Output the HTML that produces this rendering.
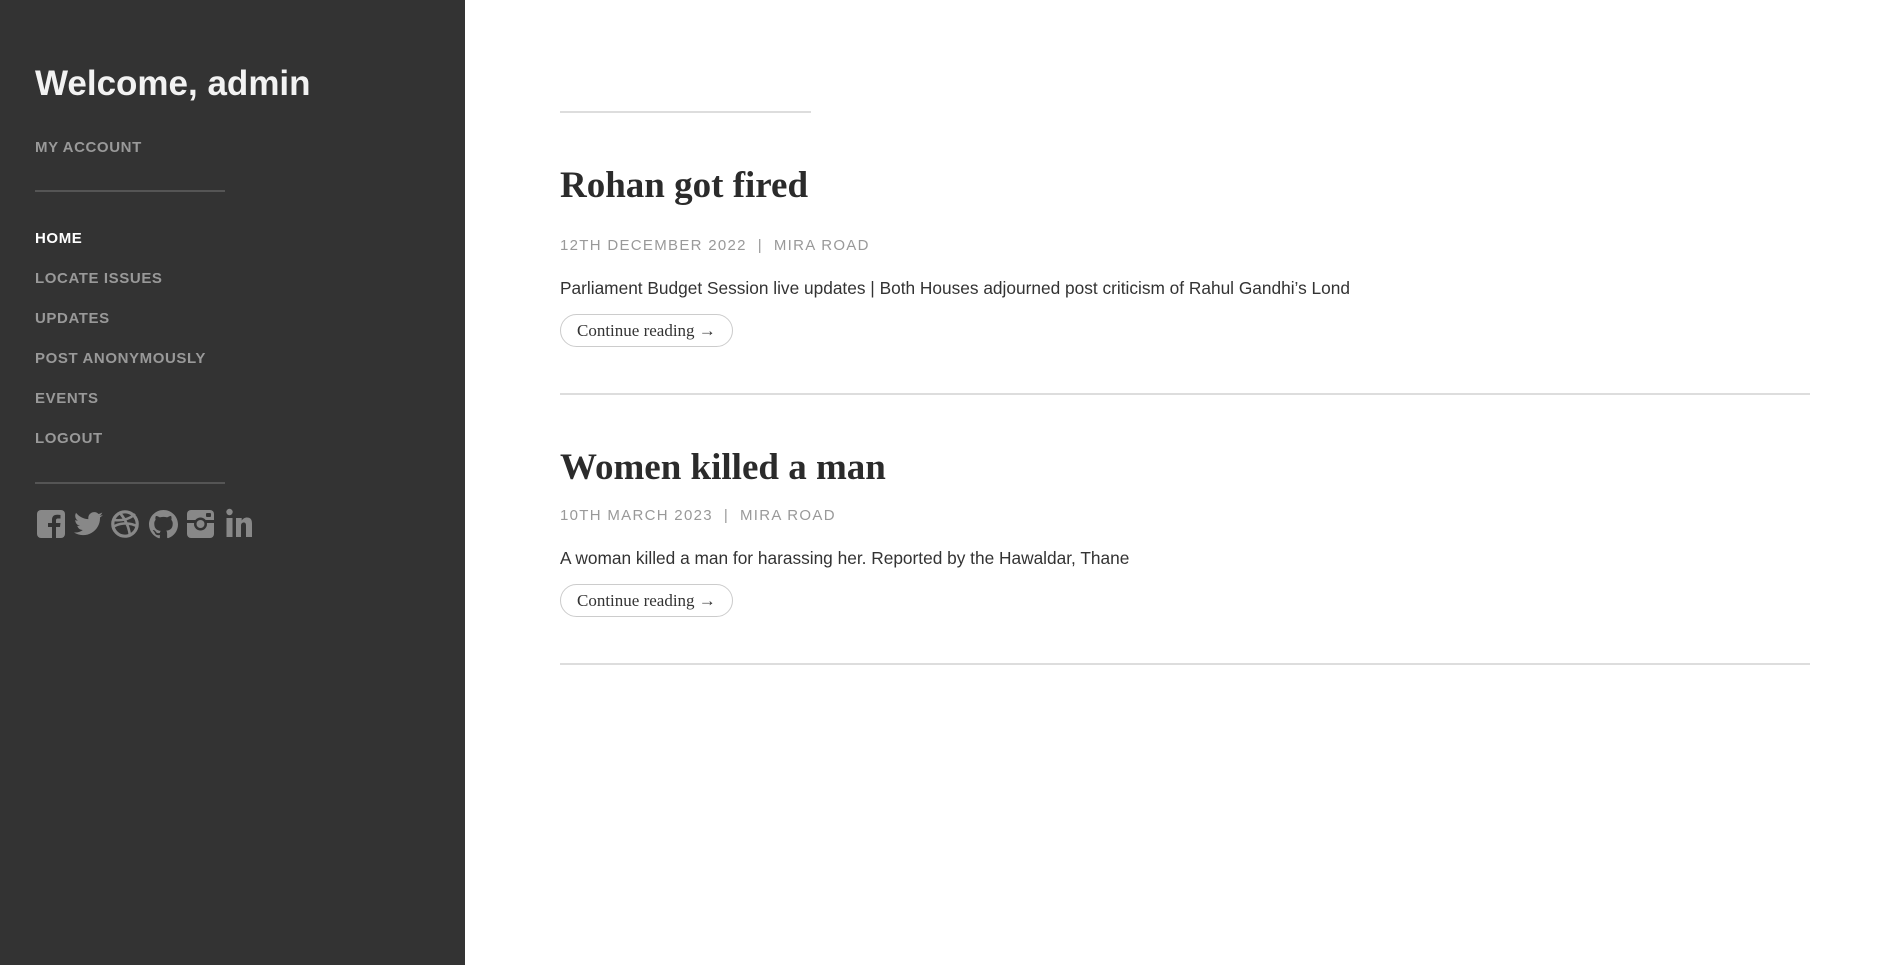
<!DOCTYPE html>
<html><head><meta charset="utf-8"><style>
*{margin:0;padding:0;box-sizing:border-box}
html,body{width:1895px;height:965px;overflow:hidden;background:#fff;font-family:"Liberation Sans",Arial,sans-serif}
#side{position:absolute;left:0;top:0;width:465px;height:965px;background:#333}
.a{position:absolute;white-space:nowrap}
.nav{font-size:15px;font-weight:bold;letter-spacing:0.6px;color:#999}
.hr{position:absolute;height:2px;background:#555}
.mhr{position:absolute;height:1px;background:#d5d5d5}
.t{font-family:"Liberation Serif",serif;font-weight:bold;font-size:37px;color:#2b2b2b}
.m{font-size:15px;letter-spacing:1.3px;color:#999}
.e{font-size:17.3px;color:#333}
.b{position:absolute;height:33px;border:1px solid #ccc;border-radius:17px;font-family:"Liberation Serif",serif;font-size:17px;color:#333;line-height:31px;padding:0 16px;white-space:nowrap}
svg{position:absolute}
</style></head><body>
<div id="side">
<div class="a" style="left:35px;top:64px;font-size:35px;font-weight:bold;color:#f2f2f2">Welcome, admin</div>
<div class="a nav" style="left:35px;top:139px">MY ACCOUNT</div>
<div class="hr" style="left:35px;top:190px;width:190px"></div>
<div class="a nav" style="left:35px;top:230px;color:#fff">HOME</div>
<div class="a nav" style="left:35px;top:270px">LOCATE ISSUES</div>
<div class="a nav" style="left:35px;top:310px">UPDATES</div>
<div class="a nav" style="left:35px;top:350px">POST ANONYMOUSLY</div>
<div class="a nav" style="left:35px;top:390px">EVENTS</div>
<div class="a nav" style="left:35px;top:430px">LOGOUT</div>
<div class="hr" style="left:35px;top:482px;width:190px"></div>
<svg style="left:37px;top:510px" width="28" height="28" viewBox="0 0 28 28"><rect width="28" height="28" rx="4" fill="#888"/><path d="M19 28V17h4l.5-4H19v-2.5c0-1.2.4-2 2-2h2.5V5c-.5 0-1.8-.2-3.5-.2-3.4 0-5 2-5 5.2V13h-4v4h4v11z" fill="#333"/></svg>
<svg style="left:74px;top:511px" width="29" height="26" viewBox="0 0 24 20"><path d="M24 2.4c-.9.4-1.8.6-2.8.8 1-.6 1.8-1.6 2.2-2.7-1 .6-2 1-3.1 1.2A4.9 4.9 0 0 0 11.9 6C7.7 5.8 4.1 3.8 1.7.8c-1.4 2.3-.6 5 1.5 6.5-.8 0-1.6-.3-2.2-.6 0 2.4 1.7 4.4 3.9 4.8-.7.2-1.5.2-2.2.1.6 2 2.4 3.4 4.6 3.4A9.9 9.9 0 0 1 0 17a14 14 0 0 0 21.5-12.4c1-.7 1.8-1.5 2.5-2.2z" fill="#888"/></svg>
<svg style="left:111px;top:510px" width="28" height="28" viewBox="0 0 28 28"><circle cx="14" cy="14" r="12.2" fill="none" stroke="#888" stroke-width="3.2"/><path d="M3 10c8 1 16-1 21-6M9 3c5 6 9 13 10 23M2 17c6-4 15-5 24-1" fill="none" stroke="#888" stroke-width="2.6"/></svg>
<svg style="left:149px;top:510px" width="29" height="29" viewBox="0 0 16 16"><path fill="#888" d="M8 0C3.6 0 0 3.6 0 8c0 3.5 2.3 6.5 5.5 7.6.4.1.5-.2.5-.4v-1.4c-2.2.5-2.7-1-2.7-1-.4-.9-.9-1.2-.9-1.2-.7-.5.1-.5.1-.5.8.1 1.2.8 1.2.8.7 1.2 1.9.9 2.3.7.1-.5.3-.9.5-1.1-1.8-.2-3.6-.9-3.6-4 0-.9.3-1.6.8-2.1-.1-.2-.4-1 .1-2.1 0 0 .7-.2 2.2.8.6-.2 1.3-.3 2-.3s1.4.1 2 .3c1.5-1 2.2-.8 2.2-.8.4 1.1.2 1.9.1 2.1.5.6.8 1.3.8 2.1 0 3.1-1.9 3.7-3.6 3.9.3.3.5.8.5 1.5v2.2c0 .2.1.5.6.4C13.7 14.5 16 11.5 16 8c0-4.4-3.6-8-8-8z"/></svg>
<svg style="left:187px;top:510px" width="27" height="28" viewBox="0 0 27 28"><rect width="27" height="28" rx="4" fill="#888"/><rect x="0" y="10" width="27" height="3" fill="#333"/><circle cx="13.5" cy="14" r="6.5" fill="#333"/><circle cx="13.5" cy="14" r="4" fill="#888"/><rect x="19" y="3" width="5" height="4" rx="1" fill="#333"/></svg>
<svg style="left:226px;top:508px" width="26" height="30" viewBox="0 0 26 30"><circle cx="3.5" cy="4" r="3.2" fill="#888"/><rect x="0.5" y="10" width="6" height="19" fill="#888"/><path d="M10 10h5.7v2.6c1-1.8 3-3.1 5.3-3.1 4 0 5 2.6 5 6.3V29h-6V17.5c0-1.8-.5-3-2.2-3-1.8 0-2.8 1.3-2.8 3.2V29h-5z" fill="#888"/></svg>
</div>
<div class="mhr" style="left:560px;top:111px;width:251px;height:2px;background:#ddd"></div>
<div class="a t" style="left:560px;top:164px">Rohan got fired</div>
<div class="a m" style="left:560px;top:237px">12TH DECEMBER 2022 &nbsp;|&nbsp; MIRA ROAD</div>
<div class="a e" style="left:560px;top:278px">Parliament Budget Session live updates | Both Houses adjourned post criticism of Rahul Gandhi’s Lond</div>
<div class="b" style="left:560px;top:314px">Continue reading →</div>
<div class="mhr" style="left:560px;top:393px;width:1250px;height:2px;background:#ddd"></div>
<div class="a t" style="left:560px;top:446px">Women killed a man</div>
<div class="a m" style="left:560px;top:507px">10TH MARCH 2023 &nbsp;|&nbsp; MIRA ROAD</div>
<div class="a e" style="left:560px;top:548px">A woman killed a man for harassing her. Reported by the Hawaldar, Thane</div>
<div class="b" style="left:560px;top:584px">Continue reading →</div>
<div class="mhr" style="left:560px;top:663px;width:1250px;height:2px;background:#ddd"></div>
</body></html>
